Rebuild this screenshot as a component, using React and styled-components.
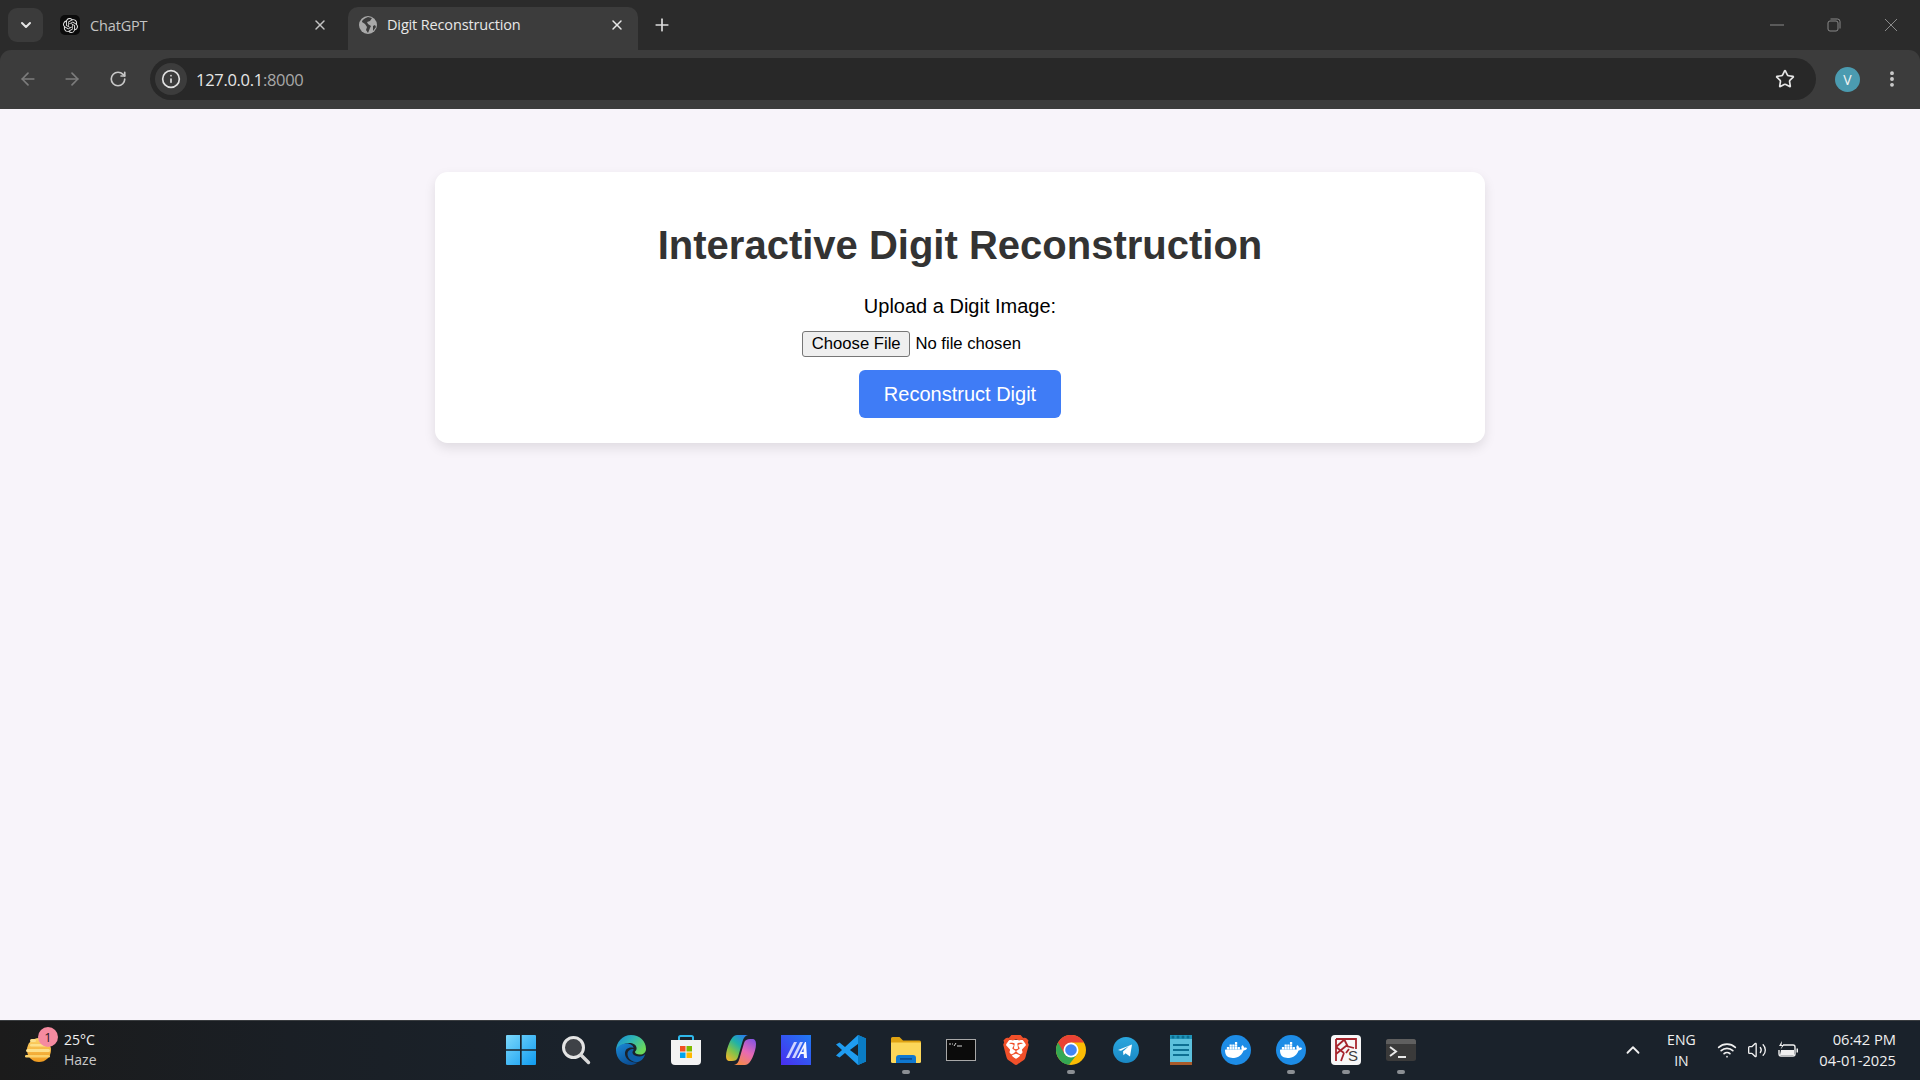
import React from 'react'
import styled, { createGlobalStyle } from 'styled-components'
import {
  ArrowLeft, ArrowRight, RotateCw, Info, Star, X, Plus, ChevronDown, ChevronUp,
  EllipsisVertical, Wifi, Volume2,
} from 'lucide-react'
import { SiOpenai, SiDocker, SiBrave } from 'react-icons/si'

const GlobalStyle = createGlobalStyle`
  html, body { margin: 0; padding: 0; height: 100%; overflow: hidden; }
  #root { height: 100%; }
`

const Screen = styled.div`
  width: 1920px;
  height: 1080px;
  display: flex;
  flex-direction: column;
  background: #f8f4fa;
  font-family: "Liberation Sans", Arial, sans-serif;
`

/* browser chrome */
const BrowserFrame = styled.header`
  flex: none;
  background: #2b2b2b;
`

const TabStrip = styled.div`
  height: 50px;
  display: flex;
  align-items: flex-end;
  padding-left: 8px;
  font-family: "Open Sans", sans-serif;
`

const TabSearch = styled.div`
  width: 35px;
  height: 34px;
  margin: 0 5px 8px 0;
  border-radius: 9px;
  background: #3b3b3b;
  color: #e6e6e6;
  display: flex;
  align-items: center;
  justify-content: center;
`

const Tab = styled.div`
  width: 290px;
  height: ${p => (p.$active ? '43px' : '42px')};
  box-sizing: border-box;
  margin-right: ${p => (p.$active ? '0' : '10px')};
  padding: 0 ${p => (p.$active ? '13px' : '10px')} 8px ${p => (p.$active ? '11px' : '12px')};
  border-radius: 10px 10px 0 0;
  background: ${p => (p.$active ? '#3c3c3c' : 'transparent')};
  color: ${p => (p.$active ? '#e8e8e8' : '#c4c4c4')};
  display: flex;
  align-items: center;
  font-size: 14.5px;
  letter-spacing: -0.15px;
`

const TabTitle = styled.span`
  flex: 1;
  margin-left: 10px;
`

const ChatFavicon = styled.div`
  width: 20px;
  height: 20px;
  border-radius: 5px;
  background: #0b0b0b;
  color: #e4e4e4;
  display: flex;
  align-items: center;
  justify-content: center;
`

const NewTab = styled.div`
  height: 42px;
  margin-left: 14px;
  padding-bottom: 8px;
  box-sizing: border-box;
  color: #dcdcdc;
  display: flex;
  align-items: center;
`

const WindowControls = styled.div`
  margin-left: auto;
  height: 50px;
  display: flex;
  align-items: center;
  color: #8a8a8a;
  padding-right: 22px;
  gap: 43px;
`

const Toolbar = styled.div`
  height: 59px;
  box-sizing: border-box;
  padding: 0 18px 1px 17px;
  background: #3c3c3c;
  border-radius: 11px 11px 0 0;
  display: flex;
  align-items: center;
`

const NavButton = styled.div`
  width: 22px;
  display: flex;
  justify-content: center;
  margin: 0 ${p => (p.$on ? '20px' : '22px')} 0 ${p => (p.$on ? '2px' : '0')};
  color: ${p => (p.$on ? '#c8c8c8' : '#7c7c7c')};
`

const Omnibox = styled.div`
  flex: 1;
  height: 42px;
  margin: 0 19.5px 0 1px;
  padding: 0 21px 0 5px;
  background: #282828;
  border-radius: 21px;
  display: flex;
  align-items: center;
  color: #e6e6e6;
  font-family: "Open Sans", sans-serif;
  font-size: 16.5px;
  letter-spacing: -0.3px;
`

const SiteInfo = styled.div`
  width: 32px;
  height: 32px;
  border-radius: 50%;
  background: #3c3c3c;
  color: #e0e0e0;
  display: flex;
  align-items: center;
  justify-content: center;
  margin-right: 9px;
`

const Port = styled.span`
  color: #a8a8a8;
`

const Url = styled.div`
  flex: 1;
`

const Avatar = styled.div`
  width: 25px;
  height: 25px;
  border-radius: 50%;
  background: #4b9bb0;
  color: #f2f2f2;
  font-size: 14px;
  font-family: "Open Sans", sans-serif;
  display: flex;
  align-items: center;
  justify-content: center;
  margin-right: 22px;
`

const MenuButton = styled.div`
  color: #d0d0d0;
  display: flex;
`

/* page */
const Page = styled.main`
  flex: 1;
  min-height: 0;
  padding-top: 63px;
`

const Card = styled.div`
  width: 1050px;
  box-sizing: border-box;
  margin: 0 auto;
  padding: 25px;
  background: #fff;
  border-radius: 12.5px;
  box-shadow: 0 5px 12px rgba(0, 0, 0, 0.1);
  text-align: center;
`

const Title = styled.h1`
  font-size: 40px;
  font-weight: 700;
  color: #333;
  margin: 25.8px 0 26.8px;
`

const UploadLabel = styled.label`
  display: block;
  font-size: 20px;
  color: #000;
  margin-bottom: 13px;
`

const FileInput = styled.input`
  display: block;
  margin: 0 auto 13.5px;
  width: 316px;
  font-family: "Liberation Sans", Arial, sans-serif;
  font-size: 16.67px;
  color: #000;

  &::file-selector-button {
    font: inherit;
    padding: 2px 8.75px;
    margin-right: 5px;
    border: 1.25px solid #767676;
    border-radius: 3px;
    background: #efefef;
    color: #000;
  }
`

const SubmitButton = styled.button`
  display: block;
  margin: 0 auto;
  width: 202px;
  height: 48px;
  border: 0;
  border-radius: 6px;
  background: #3f7cf6;
  color: #fff;
  font-family: "Liberation Sans", Arial, sans-serif;
  font-size: 20px;
`

/* windows taskbar */
const Taskbar = styled.footer`
  height: 60px;
  flex: none;
  box-sizing: border-box;
  border-top: 1px solid #3a3d40;
  padding-bottom: 2px;
  background: linear-gradient(90deg, #1b1b1b 0, #1a1f25 15%, #1a222b 30%, #1a222b 100%);
  display: grid;
  grid-template-columns: 1fr auto 1fr;
  align-items: center;
  color: #f0f0f0;
  font-family: "Open Sans", sans-serif;
  font-size: 14px;
`

const Weather = styled.div`
  display: flex;
  align-items: center;
  padding-left: 25px;
`

const WeatherIconWrap = styled.div`
  position: relative;
  width: 26px;
  height: 30px;
  margin-right: 13px;
`

const WeatherBadge = styled.span`
  position: absolute;
  top: -8px;
  left: 13px;
  width: 20px;
  height: 20px;
  border-radius: 50%;
  background: #f58ba0;
  color: #2a1a1e;
  font-size: 13px;
  line-height: 20px;
  text-align: center;
`

const StackText = styled.div`
  line-height: 21px;
  text-align: ${p => p.$align || 'left'};
`

const Muted = styled.div`
  color: #c9c9c9;
  margin-top: -1px;
`

const Apps = styled.div`
  display: flex;
  padding-left: 2px;
`

const AppSlot = styled.div`
  position: relative;
  width: 55px;
  height: 57px;
  display: flex;
  align-items: center;
  justify-content: center;
`

const RunDot = styled.span`
  position: absolute;
  left: 23.5px;
  bottom: 4px;
  width: 8px;
  height: 4px;
  border-radius: 2px;
  background: #8b8f94;
`

const Tray = styled.div`
  display: flex;
  align-items: center;
  justify-content: flex-end;
  padding-right: 24px;
`

const TrayChevron = styled.div`
  display: flex;
  margin-right: 17px;
`

const TrayLang = styled.div`
  width: 40px;
  margin-right: 16px;
`

const TrayIcons = styled.div`
  display: flex;
  align-items: center;
  gap: 10px;
  margin-right: 20px;
`

const Clock = styled(StackText)`
  font-size: 14.7px;
`

/* drawings */
const RestoreIcon = () => (
  <svg width="14" height="14" viewBox="0 0 14 14" fill="none" stroke="currentColor" strokeWidth="1">
    <rect x="1" y="3" width="10" height="10" rx="2" />
    <path d="M3.5 1h7a2.5 2.5 0 0 1 2.5 2.5v7" />
  </svg>
)

const MinimizeIcon = () => (
  <svg width="14" height="14" viewBox="0 0 14 14" stroke="currentColor" strokeWidth="1">
    <path d="M0 7h14" />
  </svg>
)

const CloseIcon = () => (
  <svg width="14" height="14" viewBox="0 0 14 14" stroke="currentColor" strokeWidth="1">
    <path d="M1 1l12 12M13 1L1 13" />
  </svg>
)

const GlobeIcon = () => (
  <svg width="18" height="18" viewBox="0 0 18 18">
    <circle cx="9" cy="9" r="9" fill="#a9a9a9" />
    <path d="M9 1C6 2 3 4 3 6l3 2 2 3-1 3 2 3 2-5 1-2-3-2-1-2 3-1 2-3z" fill="#3c3c3c" />
    <path d="M14 10l2-1 1 2-3 4z" fill="#3c3c3c" />
  </svg>
)

const WeatherIcon = () => (
  <svg width="26" height="30" viewBox="0 0 26 30">
    <defs>
      <linearGradient id="sun" x1="0" y1="0" x2="0" y2="1">
        <stop offset="0" stopColor="#fdd56b" />
        <stop offset="1" stopColor="#ee9a1f" />
      </linearGradient>
    </defs>
    <circle cx="14" cy="15" r="12" fill="url(#sun)" />
    <g fill="#fde08a">
      <rect x="5" y="4" width="6" height="3" rx="1.5" />
      <rect x="5" y="9" width="16" height="2.5" rx="1.2" />
      <rect x="1" y="14" width="24" height="3" rx="1.5" />
      <rect x="0" y="20" width="25" height="2.5" rx="1.2" fill="#fbd16a" />
    </g>
  </svg>
)

const BatteryIcon = () => (
  <svg width="22" height="18" viewBox="0 0 22 18" fill="none" stroke="#f0f0f0" strokeWidth="1.4">
    <path d="M6 4h10a2 2 0 0 1 2 2v7a2 2 0 0 1-2 2H4a2 2 0 0 1-2-2V9" />
    <path d="M4 9h13v5H3z" fill="#f0f0f0" stroke="none" />
    <path d="M19.5 7.5h1.5v4h-1.5z" fill="#f0f0f0" stroke="none" />
    <path d="M5 0L2 5h3L3.5 8.5 7 4H4.5z" fill="#f0f0f0" stroke="none" />
  </svg>
)

const WindowsLogo = () => (
  <svg width="30" height="30" viewBox="0 0 30 30">
    <defs>
      <linearGradient id="win" x1="0" y1="0" x2="1" y2="1">
        <stop offset="0" stopColor="#7cd8fb" />
        <stop offset="1" stopColor="#0f9bf0" />
      </linearGradient>
    </defs>
    <path d="M1 0h13v14.3H0V1a1 1 0 0 1 1-1zM15.7 0H29a1 1 0 0 1 1 1v13.3H15.7zM0 15.7h14V30H1a1 1 0 0 1-1-1zM15.7 15.7H30V29a1 1 0 0 1-1 1H15.7z" fill="url(#win)" />
  </svg>
)

const SearchLogo = () => (
  <svg width="30" height="30" viewBox="0 0 30 30">
    <circle cx="12.5" cy="12.5" r="10" fill="#3f4247" stroke="#e4e4e4" strokeWidth="3" />
    <path d="M20 20l7.5 7.5" stroke="#d8d8d8" strokeWidth="3.4" strokeLinecap="round" />
  </svg>
)

const EdgeLogo = () => (
  <svg width="30" height="30" viewBox="0 0 30 30">
    <defs>
      <linearGradient id="edgeA" x1="0" y1="0" x2="1" y2="0.6">
        <stop offset="0" stopColor="#1787d8" />
        <stop offset="0.5" stopColor="#2fb6b4" />
        <stop offset="1" stopColor="#6bd85a" />
      </linearGradient>
      <linearGradient id="edgeB" x1="0" y1="0" x2="0.6" y2="1">
        <stop offset="0" stopColor="#1a8ad8" />
        <stop offset="1" stopColor="#0b4d92" />
      </linearGradient>
    </defs>
    <path d="M15 0c8.5 0 15 6 15 14 0 3.500-2.500 5.500-6 5.500-3 0-5-1-5-2.500 0-1 2-1.500 1.500-4.500C20 9.500 17 8 13.500 8 8 8 3 11 0 16 0 7 6.500 0 15 0z" fill="url(#edgeA)" />
    <path d="M0 15c1.500-4 6-6.500 10.500-6.500 4 0 7 2.200 7 4.500-3.500-1.500-9 .5-8.500 6 .3 4.500 5 8.500 10.500 8.500.8 0 1.500 0 2.200-.2C19.500 29.300 17.500 30 15 30 6.500 30 0 23.500 0 15z" fill="url(#edgeB)" />
    <path d="M11.500 19c0-3 2.500-5 6-5 .5 2-1.500 2-1 4 .6 2.300 3.500 3.500 7 3.500 2.500 0 4.500-1 5.800-2.500C27.500 24.500 24 27.500 19.500 27c-4.500-.5-8-4-8-8z" fill="#0f5fa8" />
  </svg>
)

const StoreLogo = () => (
  <svg width="30" height="30" viewBox="0 0 30 30">
    <path d="M8 7V2.500A1.500 1.500 0 0 1 9.500 1h11A1.500 1.500 0 0 1 22 2.500V7" fill="none" stroke="#2fb8ea" strokeWidth="2" />
    <path d="M0 5h30v21a4 4 0 0 1-4 4H4a4 4 0 0 1-4-4z" fill="#f3f3f3" />
    <rect x="9" y="11" width="5.500" height="5.500" fill="#f25022" />
    <rect x="15.500" y="11" width="5.500" height="5.500" fill="#7fba00" />
    <rect x="9" y="17.500" width="5.500" height="5.500" fill="#00a4ef" />
    <rect x="15.500" y="17.500" width="5.500" height="5.500" fill="#ffb900" />
  </svg>
)

const CopilotLogo = () => (
  <svg width="30" height="30" viewBox="0 0 30 30">
    <defs>
      <linearGradient id="copA" x1="0.1" y1="1" x2="0.8" y2="0">
        <stop offset="0" stopColor="#f4b52c" />
        <stop offset="0.35" stopColor="#7fc34a" />
        <stop offset="0.65" stopColor="#1fb2a8" />
        <stop offset="1" stopColor="#2a7fe8" />
      </linearGradient>
      <linearGradient id="copB" x1="0.3" y1="1" x2="0.8" y2="0">
        <stop offset="0" stopColor="#f58a4a" />
        <stop offset="0.5" stopColor="#e86ab4" />
        <stop offset="1" stopColor="#8a55e0" />
      </linearGradient>
    </defs>
    <path d="M11 0h11c-3 .5-4.500 3-5.500 6.500L12 22c-1 3-3 4-6 4H4c-3 0-4-2-4-5 0-4 1.500-9 3.500-13.500C5.500 3 8 0 11 0z" fill="url(#copA)" />
    <path d="M19 30H8c3-.5 4.500-3 5.500-6.500L18 8c1-3 3-4 6-4h2c3 0 4 2 4 5 0 4-1.500 9-3.500 13.500C24.500 27 22 30 19 30z" fill="url(#copB)" />
  </svg>
)

const MatlabLogo = () => (
  <svg width="30" height="30" viewBox="0 0 30 30">
    <defs>
      <linearGradient id="mat" x1="0" y1="1" x2="1" y2="0">
        <stop offset="0" stopColor="#4a2df0" />
        <stop offset="1" stopColor="#1f7bf2" />
      </linearGradient>
    </defs>
    <rect width="30" height="30" fill="url(#mat)" />
    <path d="M5 23L13 7h3L8 23zM11 23L19 7h3L14 23z" fill="#cfd4ff" />
    <path d="M16 23l8-16h1l1 16h-3l-.3-4h-3l-2 4zM22.500 13l-2 4h2.200z" fill="#f4f5ff" />
  </svg>
)

const VscodeLogo = () => (
  <svg width="30" height="30" viewBox="0 0 30 30">
    <path d="M22 0l8 3.500v23L22 30 9 18l-5.500 4.500L0 20.500 6 15 0 9.500 3.500 7.500 9 12z" fill="#1f9cf0" />
    <path d="M22 0l8 3.500v23L22 30V21l-8-6 8-6z" fill="#0a7cc4" />
    <path d="M22 9v12l-8-6z" fill="#1a222b" />
  </svg>
)

const FolderLogo = () => (
  <svg width="30" height="26" viewBox="0 0 30 26">
    <path d="M0 1.500A1.500 1.500 0 0 1 1.500 0h7l3.500 3.500h16.500A1.500 1.500 0 0 1 30 5v4H0z" fill="#e0a312" />
    <path d="M0 5.500h30v19a1.500 1.500 0 0 1-1.500 1.500h-27A1.500 1.500 0 0 1 0 24.500z" fill="#fcd75a" />
    <path d="M5 26v-5a3 3 0 0 1 3-3h14a3 3 0 0 1 3 3v5z" fill="#0f78d0" />
    <rect x="9" y="21" width="12" height="1.800" fill="#0a4f94" />
  </svg>
)

const CmdLogo = () => (
  <svg width="30" height="22" viewBox="0 0 30 22">
    <rect x="0.500" y="0.500" width="29" height="21" fill="#0b0b0b" stroke="#a8a8a8" />
    <path d="M3 5h2M6 5h1M8 7l2-3M11 7h5" stroke="#d8d8d8" strokeWidth="1" />
  </svg>
)

const BraveWrap = styled.div`
  position: relative;
  width: 28px;
  height: 30px;

  svg {
    position: absolute;
    left: -1px;
    top: 0;
  }
`

const BraveLogo = () => (
  <BraveWrap>
    <svg width="30" height="30" viewBox="0 0 24 24">
      <path d="M5 4h14l2 6-4 10-5 3-5-3-4-10z" fill="#fff" />
    </svg>
    <SiBrave size={30} color="#f1502a" />
  </BraveWrap>
)

const ChromeLogo = () => (
  <svg width="30" height="30" viewBox="0 0 30 30">
    <circle cx="15" cy="15" r="15" fill="#fbbc04" />
    <path d="M2 7.500A15 15 0 0 0 13 29.870L21.500 18.750 15 15z" fill="#34a853" />
    <path d="M15 7.500h13A15 15 0 0 0 2 7.500l6.500 11.250L15 15z" fill="#e94235" />
    <circle cx="15" cy="15" r="7.500" fill="#fff" />
    <circle cx="15" cy="15" r="5.800" fill="#4285f4" />
  </svg>
)

const TelegramLogo = () => (
  <svg width="26" height="26" viewBox="0 0 26 26">
    <defs>
      <linearGradient id="tg" x1="0" y1="0" x2="0" y2="1">
        <stop offset="0" stopColor="#2aa7de" />
        <stop offset="1" stopColor="#1a88c4" />
      </linearGradient>
    </defs>
    <circle cx="13" cy="13" r="13" fill="url(#tg)" />
    <path d="M5 13l14-5.500-2 12-4.500-3.200-2 2-.5-3.800 6-5.500-8 4.800z" fill="#fff" />
  </svg>
)

const NotepadLogo = () => (
  <svg width="24" height="30" viewBox="0 0 24 30">
    <rect width="22" height="29" x="1" y="0.500" fill="#5cc0dc" />
    <rect x="1" y="27" width="22" height="3" fill="#a85a2a" />
    <rect x="1" y="0" width="22" height="4" fill="#1f93b8" />
    <g fill="#0d6f92">
      <circle cx="4" cy="2" r="1.500" /><circle cx="9" cy="2" r="1.500" /><circle cx="14" cy="2" r="1.500" /><circle cx="19" cy="2" r="1.500" />
      <rect x="4" y="9" width="16" height="2" /><rect x="4" y="14" width="16" height="2" /><rect x="4" y="19" width="16" height="2" />
    </g>
  </svg>
)

const DockerBadge = styled.div`
  width: 30px;
  height: 30px;
  border-radius: 50%;
  background: #1d8ce6;
  color: #fff;
  display: flex;
  align-items: center;
  justify-content: center;
`

const DockerLogo = () => (
  <DockerBadge><SiDocker size={22} /></DockerBadge>
)

const KsLogo = () => (
  <svg width="30" height="30" viewBox="0 0 30 30">
    <rect width="30" height="30" rx="4" fill="#f7f7f7" />
    <path d="M5 4h20v10M5 4v22M5 12l9-8M5 12l8 6M5 19l10-8 8 2M13 4l4 8M13 18l-3 8M15 18l3-4" fill="none" stroke="#a6242c" strokeWidth="1.800" />
    <text x="17" y="26" fontSize="15" fontFamily="Liberation Sans, sans-serif" fill="#3c3c3c">S</text>
  </svg>
)

const TerminalLogo = () => (
  <svg width="30" height="22" viewBox="0 0 30 22">
    <rect width="30" height="22" rx="2.500" fill="#3a3a3a" />
    <path d="M0 2.500A2.500 2.500 0 0 1 2.500 0h25A2.500 2.500 0 0 1 30 2.500V5H0z" fill="#5f5f5f" />
    <path d="M4 8l6 4.500L4 17" fill="none" stroke="#e8e8e8" strokeWidth="2" />
    <path d="M12 18h8" stroke="#e8e8e8" strokeWidth="2" />
  </svg>
)

const apps = [
  { id: 'start', Icon: WindowsLogo },
  { id: 'search', Icon: SearchLogo },
  { id: 'edge', Icon: EdgeLogo },
  { id: 'store', Icon: StoreLogo },
  { id: 'copilot', Icon: CopilotLogo },
  { id: 'matlab', Icon: MatlabLogo },
  { id: 'vscode', Icon: VscodeLogo },
  { id: 'files', Icon: FolderLogo, running: true },
  { id: 'cmd', Icon: CmdLogo },
  { id: 'brave', Icon: BraveLogo },
  { id: 'chrome', Icon: ChromeLogo, running: true },
  { id: 'telegram', Icon: TelegramLogo },
  { id: 'notepad', Icon: NotepadLogo },
  { id: 'docker', Icon: DockerLogo },
  { id: 'docker2', Icon: DockerLogo, running: true },
  { id: 'ks', Icon: KsLogo, running: true },
  { id: 'terminal', Icon: TerminalLogo, running: true },
]

const App = () => {
  return (
    <Screen>
      <GlobalStyle />
      <BrowserFrame>
        <TabStrip>
          <TabSearch><ChevronDown size={16} strokeWidth={3} /></TabSearch>
          <Tab>
            <ChatFavicon><SiOpenai size={15} /></ChatFavicon>
            <TabTitle>ChatGPT</TabTitle>
            <X size={16} strokeWidth={2.200} />
          </Tab>
          <Tab $active>
            <GlobeIcon />
            <TabTitle>Digit Reconstruction</TabTitle>
            <X size={16} strokeWidth={2.200} />
          </Tab>
          <NewTab><Plus size={20} strokeWidth={2} /></NewTab>
          <WindowControls>
            <MinimizeIcon />
            <RestoreIcon />
            <CloseIcon />
          </WindowControls>
        </TabStrip>
        <Toolbar>
          <NavButton><ArrowLeft size={20} /></NavButton>
          <NavButton><ArrowRight size={20} /></NavButton>
          <NavButton $on><RotateCw size={18} strokeWidth={2.200} /></NavButton>
          <Omnibox>
            <SiteInfo><Info size={20} /></SiteInfo>
            <Url>127.0.0.1<Port>:8000</Port></Url>
            <Star size={20} strokeWidth={2} />
          </Omnibox>
          <Avatar>V</Avatar>
          <MenuButton><EllipsisVertical size={20} strokeWidth={2.600} /></MenuButton>
        </Toolbar>
      </BrowserFrame>

      <Page>
        <Card>
          <Title>Interactive Digit Reconstruction</Title>
          <UploadLabel htmlFor="digit">Upload a Digit Image:</UploadLabel>
          <FileInput id="digit" type="file" accept="image/*" />
          <SubmitButton type="button">Reconstruct Digit</SubmitButton>
        </Card>
      </Page>

      <Taskbar>
        <Weather>
          <WeatherIconWrap>
            <WeatherIcon />
            <WeatherBadge>1</WeatherBadge>
          </WeatherIconWrap>
          <StackText>
            <div>25°C</div>
            <Muted>Haze</Muted>
          </StackText>
        </Weather>
        <Apps>
          {apps.map(({ id, Icon, running }) => (
            <AppSlot key={id}>
              <Icon />
              {running && <RunDot />}
            </AppSlot>
          ))}
        </Apps>
        <Tray>
          <TrayChevron><ChevronUp size={22} strokeWidth={2} /></TrayChevron>
          <TrayLang>
            <StackText $align="center">
              <div>ENG</div>
              <div>IN</div>
            </StackText>
          </TrayLang>
          <TrayIcons>
            <Wifi size={20} strokeWidth={2} />
            <Volume2 size={20} strokeWidth={1.600} />
            <BatteryIcon />
          </TrayIcons>
          <Clock $align="right">
            <div>06:42 PM</div>
            <div>04-01-2025</div>
          </Clock>
        </Tray>
      </Taskbar>
    </Screen>
  )
}

export default App
